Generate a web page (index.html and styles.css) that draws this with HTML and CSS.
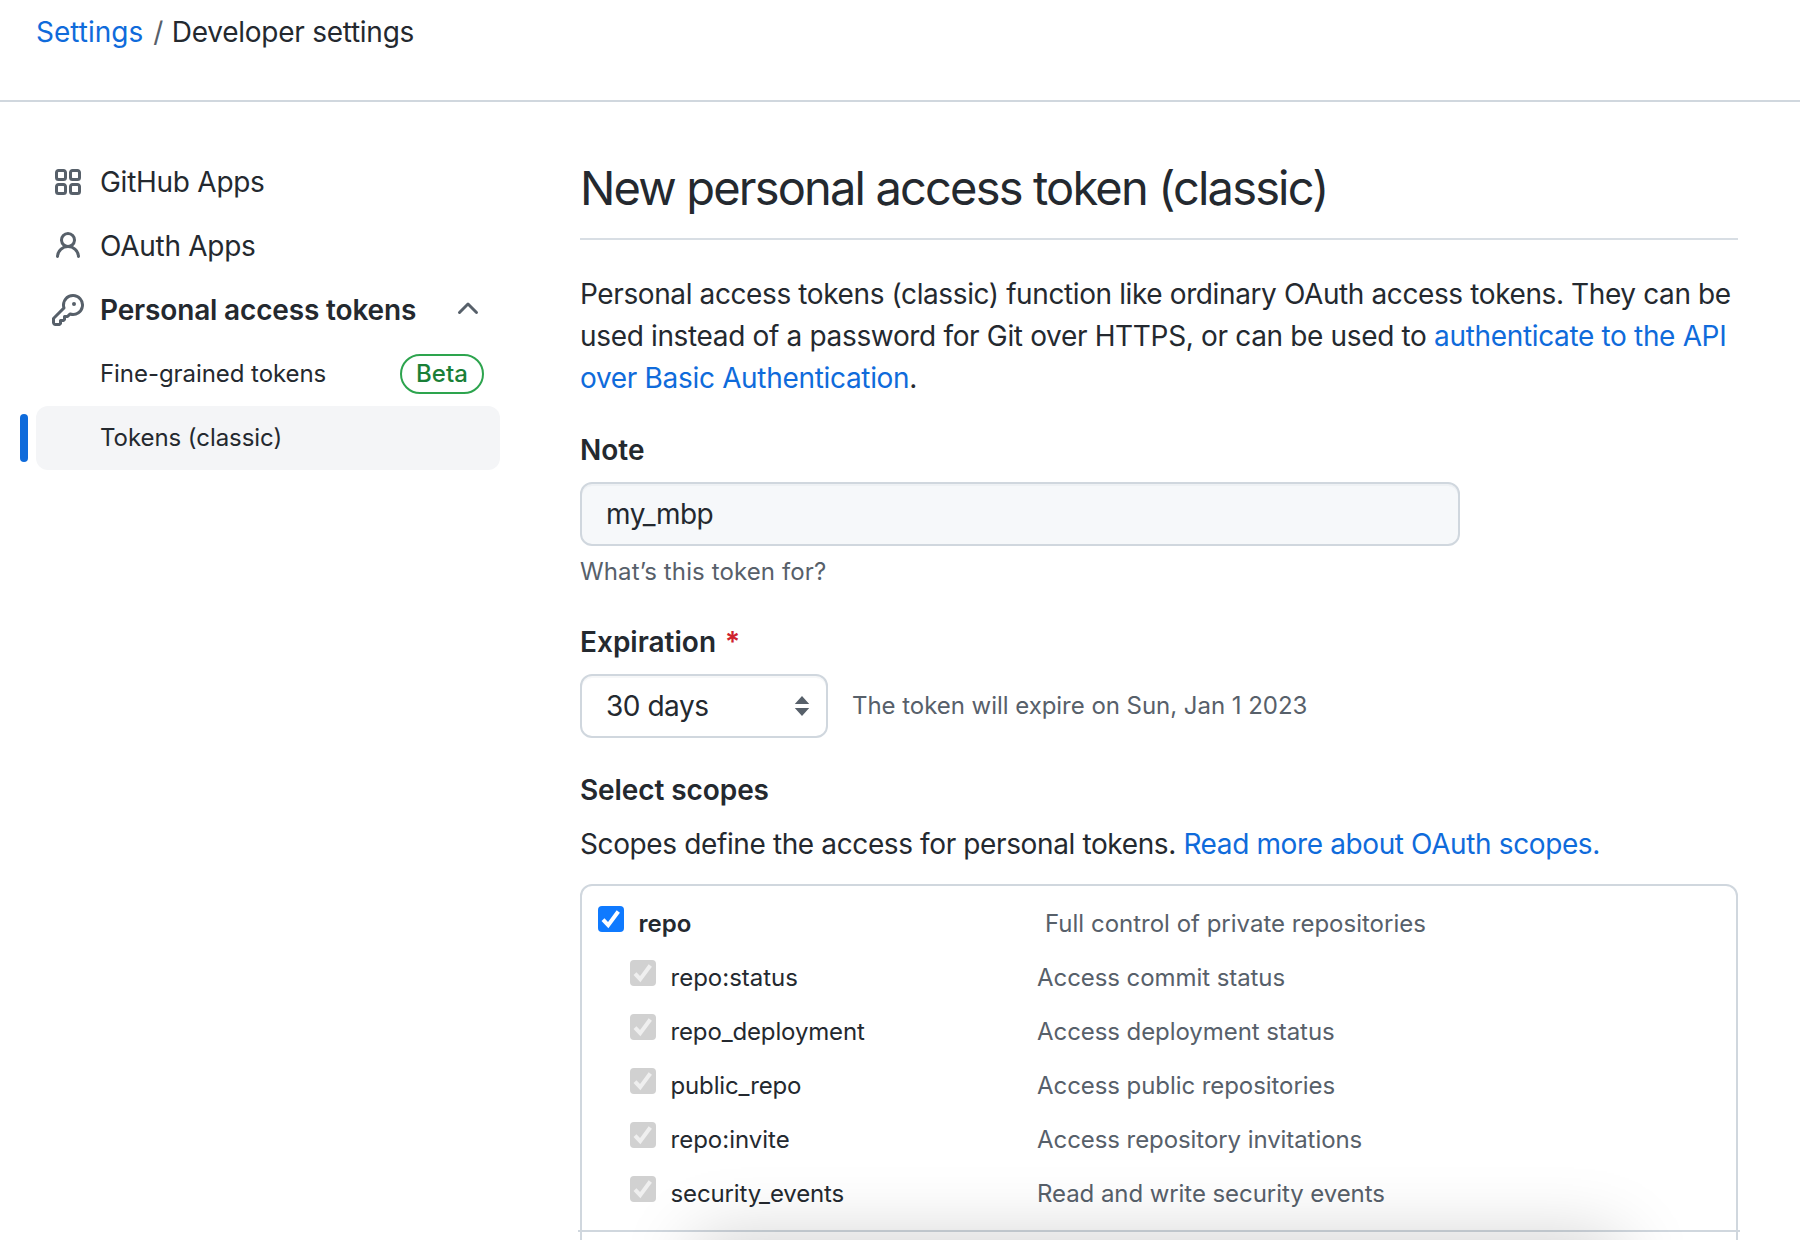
FILE: index.html
```html
<!DOCTYPE html>
<html lang="en">
<head>
<meta charset="utf-8">
<title>New personal access token (classic)</title>
<link rel="stylesheet" href="styles.css">
</head>
<body>
<header class="topbar"><nav class="crumbs"><a href="#" class="c-settings">Settings</a><span class="slash">/</span><span class="c-dev">Developer settings</span></nav></header>
<div class="layout">
<aside class="sidebar">
  <a class="item"><svg class="icon" viewBox="0 0 16 16"><path d="M1.5 3.25c0-.966.784-1.75 1.75-1.75h2.5c.966 0 1.75.784 1.75 1.75v2.5A1.75 1.75 0 0 1 5.75 7.5h-2.5A1.75 1.75 0 0 1 1.5 5.75zM3.25 3a.25.25 0 0 0-.25.25v2.5c0 .138.112.25.25.25h2.5A.25.25 0 0 0 6 5.75v-2.5A.25.25 0 0 0 5.75 3zM1.5 10.25c0-.966.784-1.75 1.75-1.75h2.5c.966 0 1.75.784 1.75 1.75v2.5a1.75 1.75 0 0 1-1.75 1.75h-2.5a1.75 1.75 0 0 1-1.75-1.75zM3.25 10a.25.25 0 0 0-.25.25v2.5c0 .138.112.25.25.25h2.5a.25.25 0 0 0 .25-.25v-2.5a.25.25 0 0 0-.25-.25zM8.5 3.25c0-.966.784-1.75 1.75-1.75h2.5c.966 0 1.75.784 1.75 1.75v2.5a1.75 1.75 0 0 1-1.75 1.75h-2.5A1.75 1.75 0 0 1 8.5 5.75zM10.25 3a.25.25 0 0 0-.25.25v2.5c0 .138.112.25.25.25h2.5a.25.25 0 0 0 .25-.25v-2.5a.25.25 0 0 0-.25-.25zM8.5 10.25c0-.966.784-1.75 1.75-1.75h2.5c.966 0 1.75.784 1.75 1.75v2.5a1.75 1.75 0 0 1-1.75 1.75h-2.5a1.75 1.75 0 0 1-1.75-1.75zM10.25 10a.25.25 0 0 0-.25.25v2.5c0 .138.112.25.25.25h2.5a.25.25 0 0 0 .25-.25v-2.5a.25.25 0 0 0-.25-.25z"/></svg><span class="t-gh">GitHub Apps</span></a>
  <a class="item"><svg class="icon" viewBox="0 0 16 16"><path d="M10.5 5a2.5 2.5 0 1 1-5 0 2.5 2.5 0 0 1 5 0zm.061 3.073a4 4 0 1 0-5.123 0 6.004 6.004 0 0 0-3.431 5.142.75.75 0 0 0 1.498.07 4.5 4.5 0 0 1 8.99 0 .75.75 0 1 0 1.498-.07 6.005 6.005 0 0 0-3.432-5.142z"/></svg><span class="t-oa">OAuth Apps</span></a>
  <a class="item"><svg class="icon" viewBox="0 0 16 16"><path d="M6.5 5.5a4 4 0 1 1 2.731 3.795.75.75 0 0 0-.768.18L7.44 10.5H6.25a.75.75 0 0 0-.75.75v1.19l-.06.06H4.25a.75.75 0 0 0-.75.75v1.19l-.06.06H1.75a.25.25 0 0 1-.25-.25v-1.69l5.024-5.023a.75.75 0 0 0 .181-.768A3.995 3.995 0 0 1 6.5 5.5zm4-5.5a5.5 5.5 0 0 0-5.348 6.788L.22 11.72a.75.75 0 0 0-.22.53v2C0 15.216.784 16 1.75 16h2a.75.75 0 0 0 .53-.22l.5-.5a.75.75 0 0 0 .22-.53V14h.75a.75.75 0 0 0 .53-.22l.5-.5a.75.75 0 0 0 .22-.53V12h.75a.75.75 0 0 0 .53-.22l.932-.932A5.5 5.5 0 1 0 10.5 0zm.5 6a1 1 0 1 0 0-2 1 1 0 0 0 0 2z"/></svg><span class="t-pat">Personal access tokens</span><svg class="icon end" viewBox="0 0 16 16"><path d="M3.22 9.78a.75.75 0 0 1 0-1.06l4.25-4.25a.75.75 0 0 1 1.06 0l4.25 4.25a.75.75 0 0 1-1.06 1.06L8 6.06 4.28 9.78a.75.75 0 0 1-1.06 0z"/></svg></a>
  <a class="item sub"><span class="t-fine">Fine-grained tokens</span><span class="badge end">Beta</span></a>
  <a class="item sub current"><span class="t-fine">Tokens (classic)</span></a>
</aside>
<main class="content">
  <h1>New personal access token (classic)</h1>
  <p class="intro"><span class="t-l1">Personal access tokens (classic) function like ordinary OAuth access tokens. They can be</span><br><span class="t-l2">used instead of a password for Git over HTTPS, or can be used to <a href="#">authenticate to the API</a></span><br><span class="t-l3"><a href="#">over Basic Authentication</a>.</span></p>
  <label class="label">Note</label>
  <div class="input"><span class="value">my_mbp</span></div>
  <p class="help">What’s this token for?</p>
  <label class="label exp">Expiration<span class="star">*</span></label>
  <div class="exprow"><div class="input select"><span class="value">30 days</span><svg class="arrows" viewBox="0 0 16 20"><path d="M8 0 15.2 8H.8zM8 20 .8 12h14.4z"/></svg></div><span class="muted t-will">The token will expire on Sun, Jan 1 2023</span></div>
  <h2>Select scopes</h2>
  <p class="scopes-intro">Scopes define the access for personal tokens. <a href="#">Read more about OAuth scopes.</a></p>
  <div class="scopes">
    <div class="row parent"><span class="check"><svg viewBox="0 0 26 26"><path d="M5 13.7 10.2 19.2 20.3 5.5"/></svg></span><span class="name">repo</span><span class="muted">Full control of private repositories</span></div>
    <div class="row"><span class="check"><svg viewBox="0 0 26 26"><path d="M5 13.7 10.2 19.2 20.3 5.5"/></svg></span><span class="name">repo:status</span><span class="muted">Access commit status</span></div>
    <div class="row"><span class="check"><svg viewBox="0 0 26 26"><path d="M5 13.7 10.2 19.2 20.3 5.5"/></svg></span><span class="name tight">repo_deployment</span><span class="muted">Access deployment status</span></div>
    <div class="row"><span class="check"><svg viewBox="0 0 26 26"><path d="M5 13.7 10.2 19.2 20.3 5.5"/></svg></span><span class="name tight">public_repo</span><span class="muted">Access public repositories</span></div>
    <div class="row"><span class="check"><svg viewBox="0 0 26 26"><path d="M5 13.7 10.2 19.2 20.3 5.5"/></svg></span><span class="name">repo:invite</span><span class="muted">Access repository invitations</span></div>
    <div class="row"><span class="check"><svg viewBox="0 0 26 26"><path d="M5 13.7 10.2 19.2 20.3 5.5"/></svg></span><span class="name tight">security_events</span><span class="muted">Read and write security events</span></div>
    <div class="divider"></div>
  </div>
</main>
</div>
<div class="popup-shadow"></div>
</body>
</html>
```
FILE: styles.css
```css
* { box-sizing: border-box; }
html, body { margin: 0; height: 1240px; overflow: hidden; }
body { position: relative; background: #fff; color: #24292f; font: 28px/42px Inter, "Liberation Sans", sans-serif; }
a { color: #0f6bdb; text-decoration: none; }
p, h1, h2 { margin: 0; }
span, a { white-space: nowrap; }
.topbar { height: 102px; padding: 11px 36px 0; border-bottom: 2px solid #d0d7de; }
.crumbs { display: flex; }
.slash { color: #57606a; margin: 0 8.5px 0 10px; }
.c-dev { letter-spacing: -.26px; }
.layout { display: flex; }
.sidebar { width: 464px; margin: 48px 80px 0 36px; }
.item { position: relative; display: flex; align-items: center; height: 64px; padding: 0 16px; color: #24292f; border-radius: 12px; }
.icon { width: 32px; height: 32px; margin-right: 16px; fill: #57606a; flex: none; }
.end { margin-left: auto; margin-right: 0; }
.t-gh, .t-oa { letter-spacing: -.27px; }
.t-pat { font-weight: 600; letter-spacing: -.16px; }
.t-fine { letter-spacing: -.06px; }
.sub { padding-left: 64px; font-size: 24px; }
.current { background: #f4f5f7; }
.current::before { content: ""; position: absolute; left: -16px; top: 8px; width: 8px; height: 48px; border-radius: 4px; background: #0f6bdb; }
.badge { width: 84px; height: 40px; border: 2px solid #2da44e; border-radius: 20px; color: #1a7f37; font-weight: 550; letter-spacing: .1px; line-height: 36px; text-align: center; }
.content { width: 1158px; padding-top: 48px; }
h1 { height: 90px; padding-top: 1px; font-size: 47px; font-weight: 430; letter-spacing: -1.83px; line-height: 74px; border-bottom: 2px solid #d8dee4; white-space: nowrap; }
.intro { margin-top: 33px; }
.t-l1 { letter-spacing: -.39px; }
.t-l2 { letter-spacing: -.34px; }
.t-l3 { letter-spacing: -.32px; }
.label { display: block; margin-top: 30px; font-weight: 600; }
.input { display: flex; align-items: center; width: 880px; height: 64px; margin-top: 11px; padding: 0 24px; border: 2px solid #d0d7de; border-radius: 12px; background: #f6f8fa; box-shadow: inset 0 2px 0 rgba(208, 215, 222, .2); }
.value { letter-spacing: -.48px; }
.help, .muted { font-size: 24px; color: #57606a; }
.help { line-height: 36px; margin-top: 8px; letter-spacing: .12px; }
.label.exp { margin-top: 31px; }
.star { margin-left: 9px; color: #cf222e; }
.exprow { display: flex; align-items: center; gap: 24px; margin-top: 11px; }
.t-will { letter-spacing: -.04px; }
.select { width: 248px; margin: 0; background: #fff; justify-content: space-between; padding-right: 16px; }
.arrows { width: 16px; height: 20px; fill: #57606a; }
h2 { margin-top: 31px; font-size: 28px; line-height: 42px; font-weight: 600; letter-spacing: -.09px; }
.scopes-intro { margin-top: 12px; letter-spacing: -.38px; }
.scopes { height: 400px; margin-top: 19px; padding-top: 18px; border: 2px solid #d0d7de; border-radius: 12px; }
.row { display: grid; grid-template-columns: 40.5px 366.5px auto; height: 54px; padding-left: 48px; font-size: 24px; line-height: 40px; }
.row .muted { letter-spacing: -.07px; }
.row .tight { letter-spacing: -.14px; }
.row.parent { padding-left: 16px; grid-template-columns: 40.5px 406.5px auto; }
.row.parent .muted { letter-spacing: 0; }
.check { width: 26px; height: 26px; margin-top: 2px; border-radius: 4px; background: #d1d1d1; }
.check svg { display: block; width: 26px; height: 26px; fill: none; stroke: #efefef; stroke-width: 4; }
.parent .check { background: #0f7aff; }
.parent .check svg { stroke: #fff; }
.parent .name { font-weight: 600; }
.divider { height: 2px; margin: 2px -4px 0; background: #d0d7de; }
.popup-shadow { position: absolute; left: 705px; top: 1250px; width: 905px; height: 200px; box-shadow: 0 0 70px 10px rgba(0, 0, 0, .2); }
```
